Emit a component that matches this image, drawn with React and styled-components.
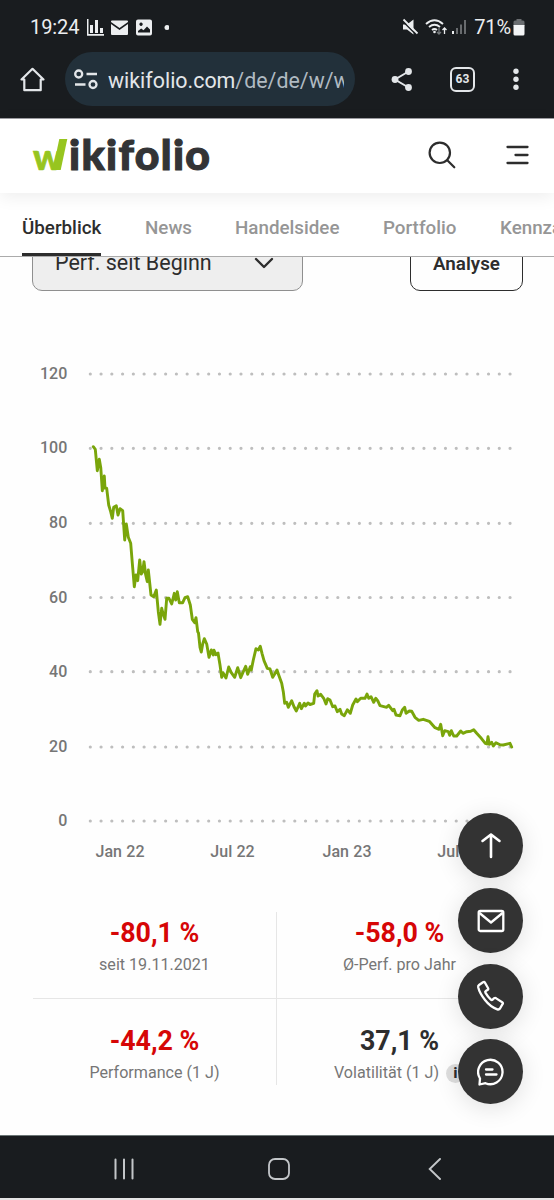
import styled, { createGlobalStyle } from "styled-components";

const palette = {
  black: "#2d2d2d",
  bar: "#191c1f",
  gray: "#767676",
  tab: "#969696",
  line: "#e6e6e6",
  red: "#d60606",
  green: "#79a50a",
  logoGreen: "#97c51f",
};

const GlobalStyle = createGlobalStyle`
  * {
    box-sizing: border-box;
  }

  body {
    margin: 0;
    background: white;
    font-family: Roboto, "Liberation Sans", sans-serif;
    color: ${palette.black};
  }

  svg {
    display: block;
    flex: none;
  }
`;

const Screen = styled.div`
  position: relative;
  display: flex;
  flex-direction: column;
  width: 554px;
  height: 1200px;
  overflow: hidden;
  background: #fefefe;
`;

const StatusBar = styled.div`
  display: flex;
  align-items: center;
  justify-content: space-between;
  height: 52px;
  padding: 2px 29px 0 30px;
  background: ${palette.bar};
  color: #eceef0;
`;

const StatusGroup = styled.div`
  display: flex;
  align-items: center;
`;

const StatusText = styled.span`
  font-size: 20px;
  line-height: 24px;
  letter-spacing: -0.1px;
`;

const Battery = styled.div`
  display: flex;
  align-items: center;
  gap: 2px;
  margin-left: 6px;
`;

const BrowserBar = styled.div`
  display: flex;
  align-items: flex-start;
  height: 66px;
  padding-left: 20px;
  background: ${palette.bar};
  color: #e3e6e9;

  .home {
    margin: 15px 19px 0 0;
  }

  .share {
    margin: 15px 0 0 36px;
  }

  .more {
    margin: 15px 0 0 37px;
  }
`;

const AddressField = styled.div`
  display: flex;
  align-items: center;
  width: 290px;
  height: 54px;
  padding: 2px 11px 0 9px;
  border-radius: 27px;
  background: #22303a;
`;

const Address = styled.div`
  width: 237px;
  margin-left: 9px;
  overflow: hidden;
  white-space: nowrap;
  font-size: 21.4px;
  color: #e3e6e9;

  span {
    color: #b0bac2;
  }
`;

const TabCount = styled.div`
  width: 25px;
  height: 25px;
  margin: 15px 0 0 37px;
  border: 2.5px solid #e3e6e9;
  border-radius: 6px;
  font-size: 12px;
  font-weight: 700;
  line-height: 20px;
  text-align: center;
`;

const Header = styled.header`
  position: relative;
  z-index: 2;
  display: flex;
  align-items: center;
  height: 75px;
  padding: 0 25px 0 32px;
  border-top: 1px solid #9a9a9f;
  background: white;
  box-shadow: 0 4px 16px rgba(0, 0, 0, 0.07);

  .search {
    margin: 0 50px 3px auto;
  }

  .menu {
    margin-bottom: 2px;
  }
`;

const Logo = styled.div`
  display: flex;
  align-items: baseline;
  height: 48px;
  font-family: Lato, "Open Sans", sans-serif;
  font-size: 41px;
  font-weight: 900;
  line-height: 46px;
  color: #333436;
`;

const LogoInitial = styled.span`
  position: relative;
  width: 37px;
  color: ${palette.logoGreen};
  -webkit-text-stroke: 0.8px ${palette.logoGreen};

  b {
    display: inline-block;
    font-weight: 900;
    transform: translateX(1px) scale(0.88, 0.86);
    transform-origin: 0 82%;
  }

  /* long upstroke of the w */
  &:after {
    content: "";
    position: absolute;
    left: 24px;
    top: 7px;
    width: 7.5px;
    height: 31px;
    background: ${palette.logoGreen};
    transform: skewX(-12deg);
  }
`;

const LogoRest = styled.span`
  display: inline-block;
  letter-spacing: 1.3px;
  transform: scaleX(1.04);
  transform-origin: 0 0;
  -webkit-text-stroke: 1.1px #333436;
`;

const TabBar = styled.nav`
  display: flex;
  align-items: flex-start;
  height: 64px;
  padding-left: 22px;
  border-bottom: 1.5px solid #ababab;
  background: white;
  overflow: hidden;
`;

const Tab = styled.div`
  flex: none;
  width: ${(props) => props.$width}px;
  height: 63px;
  margin-right: ${(props) => props.$gap || 0}px;
  padding-top: 22px;
  border-bottom: 3px solid
    ${(props) => (props.$active ? palette.black : "transparent")};
  color: ${(props) => (props.$active ? palette.black : palette.tab)};
  font-size: 18.8px;
  font-weight: 500;
  line-height: 26px;
  white-space: nowrap;
`;

const Controls = styled.div`
  display: flex;
  align-items: flex-end;
  justify-content: space-between;
  height: 34px;
  padding: 0 31px 0 32px;
  overflow: hidden;
`;

const Select = styled.div`
  display: flex;
  flex: none;
  align-items: center;
  justify-content: space-between;
  width: 271px;
  height: 56px;
  padding: 0 28px 0 22px;
  border: 1px solid #8f8f8f;
  border-radius: 10px;
  background: #eeeeee;
  font-size: 21.5px;
  line-height: 22px;
`;

const AnalyseButton = styled.div`
  flex: none;
  width: 113px;
  height: 56px;
  border: 1px solid ${palette.black};
  border-radius: 10px;
  font-size: 18.8px;
  font-weight: 600;
  line-height: 56px;
  text-align: center;
`;

const ChartArea = styled.div`
  height: 609px;

  text {
    fill: ${palette.gray};
    font-size: 16px;
    font-weight: 500;
    letter-spacing: 0.1px;
  }
`;

const Stats = styled.div`
  display: grid;
  grid-template-columns: 244px 245px;
  grid-template-rows: 87px 86px;
  width: 489px;
  margin: 12px 0 0 33px;
`;

const Stat = styled.div`
  display: flex;
  flex-direction: column;
  align-items: center;
  padding-top: ${(props) => (props.$bottom ? 25 : 4)}px;
  border-right: ${(props) => (props.$left ? `1px solid ${palette.line}` : 0)};
  border-bottom: ${(props) => (props.$bottom ? 0 : `1px solid ${palette.line}`)};
`;

const StatValue = styled.div`
  font-size: 26.8px;
  font-weight: 700;
  line-height: 34px;
  color: ${(props) => (props.$negative ? palette.red : palette.black)};
`;

const StatLabel = styled.div`
  display: flex;
  align-items: center;
  font-size: 16.1px;
  line-height: 30px;
  color: ${palette.gray};
`;

const Info = styled.span`
  width: 19px;
  height: 19px;
  margin-left: 7px;
  border-radius: 50%;
  background: #dedede;
  color: ${palette.black};
  font-size: 14px;
  font-weight: 900;
  line-height: 19px;
  text-align: center;
`;

const FloatingActions = styled.div`
  position: absolute;
  right: 31px;
  top: 813px;
  display: flex;
  flex-direction: column;
  gap: 10.4px;
`;

const RoundButton = styled.div`
  display: flex;
  align-items: center;
  justify-content: center;
  width: 65px;
  height: 65px;
  border-radius: 50%;
  background: #333333;
  color: white;
  box-shadow: 0 4px 24px rgba(0, 0, 0, 0.12);
`;

const SystemNav = styled.div`
  display: flex;
  align-items: center;
  justify-content: space-between;
  height: 65px;
  margin-top: auto;
  padding: 3px 112px 0 113px;
  border-top: 1px solid #6a7575;
  border-bottom: 2px solid #e4e4e4;
  background: ${palette.bar};

  .home {
    margin-right: 6px;
  }
`;

const tabs = [
  { name: "Überblick", width: 79, gap: 44 },
  { name: "News", width: 47, gap: 43 },
  { name: "Handelsidee", width: 105, gap: 43 },
  { name: "Portfolio", width: 74, gap: 43 },
  { name: "Kennzahlen", width: 100, gap: 0 },
];

const stats = [
  { value: "-80,1 %", label: "seit 19.11.2021", negative: true },
  { value: "-58,0 %", label: "Ø-Perf. pro Jahr", negative: true },
  { value: "-44,2 %", label: "Performance (1 J)", negative: true },
  { value: "37,1 %", label: "Volatilität (1 J)", info: true },
];

const gridLines = [
  { label: "120", y: 374 },
  { label: "100", y: 448.3 },
  { label: "80", y: 523.3 },
  { label: "60", y: 597.5 },
  { label: "40", y: 671.7 },
  { label: "20", y: 747 },
  { label: "0", y: 821 },
];

const months = [
  { label: "Jan 22", x: 120 },
  { label: "Jul 22", x: 232.5 },
  { label: "Jan 23", x: 347 },
  { label: "Jul 23", x: 459.5 },
];

const performance = `
  93.3,446.7 95.3,449.3 96.3,460 97.3,470.7 99.3,459.3 100.8,468 102.3,490.7 104.3,476
  105,488 106.7,488.3 108.7,505 110.5,511 112.3,518.3 113.7,507.3 116.3,505.7
  118,515 120,508.7 122.7,510.7 124.7,540 126.3,524 128.3,537.3 130.7,543.3
  132.3,563 134.3,586.7 136,575 137.7,580.7 139.7,560 141.3,574 142.7,571.7
  144,561.7 145.7,575 147.3,581.7 148.3,570 151,595 153.7,596.7 156.3,590
  158.3,611.7 160,624.3 161.7,608.3 163,613.3 165,619.3 166.7,598.3 169,598.3
  171.7,604 174.3,593.3 175.7,600 177.3,591.7 179.3,602.7 182.7,602.7 185,597.7
  187.7,596.7 190.3,605 192.3,619.3 194.7,622.7 196,617.7 197.7,631.7 198.5,633
  200,647.3 201.3,652 202.7,644 204.3,638.7 206.7,644 209,657.3 211.3,650
  213.3,655 214,650.3 216,654.7 218,653 220,665 221.7,677.3 223,672.7 226,678
  228.7,667 231.3,672.7 234.7,677.3 237.7,667.7 240.7,677.7 243.3,671.7
  245.7,666.3 247.7,674.3 250.3,666.7 251.3,670 253.3,660 256,648.7 258.3,650
  260.3,646.3 262,653.3 264,660.7 267.3,668.3 270,669 272.7,677.3 274.7,674
  277,670 278.7,675 281.7,683.3 283.3,691.7 284.7,703.3 286.7,702.3 288.3,707.3
  291.7,700.7 294,706.7 296.3,711 299.7,703.3 301.3,708.7 304.3,703.3 305.5,706
  308,703 310,704.5 313.7,703.3 314.7,694 317,690.7 318,696 320.7,694.3
  323.7,698.3 326,704 327.7,698.7 330,700 332.7,706.7 335,706 337.3,711.7
  340,709.3 341.7,714 344.3,715.7 347.3,709.8 350.3,713.3 352.7,705 356,699
  357.3,701.7 360.7,698.3 365,698.3 367,694 368.7,698.3 371,696.7 373.7,702.3
  375.7,698.3 377.7,700.7 380,705.7 386.7,707.3 388.7,705.3 392.7,710.7
  394,709.3 396,715 400,715.7 402.3,710 404.7,707.3 406,713.3 409.3,711
  411.7,711.3 415,717.3 418.7,720.3 423.3,719.3 429.3,721.3 435,727.7 439,729.3
  440.7,724.3 442.7,735.7 444.7,730.7 448.3,731.7 449.7,735.3 451.3,730.7
  453.7,736 456.7,736 460.7,731 463,733.3 466.7,731.7 470.7,731.3 473.7,729.7
  476.7,733.3 481.3,738.3 485.3,743.3 487,744 488,736.7 489.3,744.3 491.7,742.3
  493.3,746 496,742.7 500,744.7 503.3,745 510,743.3 511.7,747
`;

const Chart = () => (
  <ChartArea>
    <svg width="554" height="609" viewBox="0 291 554 609">
      {gridLines.map(({ label, y }) => (
        <g key={label}>
          <text x="67.5" y={y + 5} textAnchor="end">
            {label}
          </text>
          <line
            x1="90.3"
            x2="512"
            y1={y}
            y2={y}
            stroke="#bebebe"
            strokeWidth="3.2"
            strokeLinecap="round"
            strokeDasharray="0 10.763"
          />
        </g>
      ))}
      <polyline
        points={performance}
        fill="none"
        stroke={palette.green}
        strokeWidth="2.9"
        strokeLinecap="round"
        strokeLinejoin="round"
      />
      {months.map(({ label, x }) => (
        <text key={label} x={x} y="856.5" textAnchor="middle">
          {label}
        </text>
      ))}
    </svg>
  </ChartArea>
);

const NotificationIcons = () => (
  <svg width="90" height="20" viewBox="79 17 90 20" fill="#eceef0">
    <path d="M87 19h1.5v15H104v1.7H87zM90 25h3v8h-3zM95 20h3v13h-3zM100 28h3v5h-3z" />
    <path d="M111 22v-.5q0-1 1-1h15q1 0 1 1v.5l-8.500 6zM111 24l8.500 6 8.500-6v10q0 1-1 1h-15q-1 0-1-1z" />
    <path
      fillRule="evenodd"
      d="M138 19.500h12q2 0 2 2v12q0 2-2 2h-12q-2 0-2-2v-12q0-2 2-2zm0 13h12v-3l-3-3-3.500 3.700-2.300-1.800-3.200 2.600zM141 22.500a1.700 1.700 0 1 0 .1 0z"
    />
    <circle cx="167" cy="27.500" r="2.500" />
  </svg>
);

const SignalIcons = () => (
  <svg width="66" height="20" viewBox="402 17 66 20" fill="none">
    <path d="M403 24.500h4l6.500-5v15l-6.500-5h-4z" fill="#eceef0" />
    <path d="M402 20.500l15 15" stroke={palette.bar} strokeWidth="1.500" />
    <path d="M403.500 19.500l14 14" stroke="#eceef0" strokeWidth="1.800" />
    <path
      d="M426 24q8.500-7.500 17 0M429 27q5.500-4.500 11 0M432 30q2.500-2 5 0"
      stroke="#eceef0"
      strokeWidth="1.900"
    />
    <circle cx="434.500" cy="32" r="1.300" fill="#eceef0" />
    <path d="M439 28v6M437 32l2 2 2-2" stroke="#777b7e" strokeWidth="1.300" />
    <path d="M444.500 34v-6M442.500 30l2-2 2 2" stroke="#eceef0" strokeWidth="1.300" />
    <path d="M453 34v-3" stroke="#eceef0" strokeWidth="2" />
    <path
      d="M457 34v-6M461 34v-9.500M465 34V20"
      stroke="#686b6e"
      strokeWidth="2"
    />
  </svg>
);

const BatteryIcon = () => (
  <svg width="12" height="18" viewBox="0 0 12 18">
    <path d="M3.500 1h5v1.500H10q1.500 0 1.500 1.500v4H.5V4q0-1.500 1.500-1.500h1.500z" fill="#6a6d70" />
    <path d="M.5 7h11v9q0 1.500-1.500 1.500H2q-1.500 0-1.500-1.500z" fill="#f3f4f5" />
  </svg>
);

const App = () => {
  return (
    <>
      <GlobalStyle />
      <Screen>
        <StatusBar>
          <StatusGroup>
            <StatusText>19:24</StatusText>
            <NotificationIcons />
          </StatusGroup>
          <StatusGroup>
            <SignalIcons />
            <Battery>
              <StatusText>71%</StatusText>
              <BatteryIcon />
            </Battery>
          </StatusGroup>
        </StatusBar>
        <BrowserBar>
          <svg className="home" width="26" height="26" viewBox="0 0 26 26" fill="none">
            <path
              d="M1.500 12.500 12.500 1.800l11 10.700H20.700v10.700H4.300V12.500z"
              stroke="#e3e6e9"
              strokeWidth="2.200"
              strokeLinejoin="round"
            />
          </svg>
          <AddressField>
            <svg width="25" height="22" viewBox="0 0 25 22" fill="none">
              <g stroke="#e3e6e9" strokeWidth="2.300">
                <circle cx="4.700" cy="5" r="3.500" />
                <path d="M12.500 5H23M1 15.500h10.500" />
                <circle cx="19" cy="15.500" r="3.500" />
              </g>
            </svg>
            <Address>
              wikifolio.com<span>/de/de/w/w</span>
            </Address>
          </AddressField>
          <svg className="share" width="22" height="26" viewBox="0 0 22 26">
            <path d="M17.500 4.500 4 12.500l13.500 8" stroke="#e3e6e9" strokeWidth="2" fill="none" />
            <g fill="#e3e6e9">
              <circle cx="17.500" cy="4.500" r="3.400" />
              <circle cx="4" cy="12.500" r="3.400" />
              <circle cx="17.500" cy="20.500" r="3.400" />
            </g>
          </svg>
          <TabCount>63</TabCount>
          <svg className="more" width="8" height="26" viewBox="0 0 8 26" fill="#e3e6e9">
            <circle cx="4" cy="4.300" r="2.700" />
            <circle cx="4" cy="12.300" r="2.700" />
            <circle cx="4" cy="20.300" r="2.700" />
          </svg>
        </BrowserBar>
        <Header>
          <Logo>
            <LogoInitial>
              <b>w</b>
            </LogoInitial>
            <LogoRest>ikifolio</LogoRest>
          </Logo>
          <svg className="search" width="28" height="28" viewBox="0 0 28 28" fill="none">
            <g stroke={palette.black} strokeWidth="2.200" strokeLinecap="round">
              <circle cx="11.800" cy="11.800" r="10.200" />
              <path d="m19.300 19.300 7 7" />
            </g>
          </svg>
          <svg className="menu" width="23" height="20" viewBox="0 0 23 20" fill="none">
            <path
              d="M1.500 2h20M9.500 10h12M1.500 18h20"
              stroke={palette.black}
              strokeWidth="2.300"
              strokeLinecap="round"
            />
          </svg>
        </Header>
        <TabBar>
          {tabs.map((tab, i) => (
            <Tab key={tab.name} $active={i === 0} $width={tab.width} $gap={tab.gap}>
              {tab.name}
            </Tab>
          ))}
        </TabBar>
        <Controls>
          <Select>
            Perf. seit Beginn
            <svg width="20" height="12" viewBox="0 0 20 12" fill="none">
              <path
                d="m2 2 8 8 8-8"
                stroke={palette.black}
                strokeWidth="2.400"
                strokeLinecap="round"
                strokeLinejoin="round"
              />
            </svg>
          </Select>
          <AnalyseButton>Analyse</AnalyseButton>
        </Controls>
        <Chart />
        <Stats>
          {stats.map((stat, i) => (
            <Stat key={stat.label} $left={i % 2 === 0} $bottom={i > 1}>
              <StatValue $negative={stat.negative}>{stat.value}</StatValue>
              <StatLabel>
                {stat.label}
                {stat.info ? <Info>i</Info> : null}
              </StatLabel>
            </Stat>
          ))}
        </Stats>
        <SystemNav>
          <svg width="22" height="22" viewBox="0 0 22 22" fill="none">
            <path
              d="M2.500 1.500v19M11 1.500v19M19.500 1.500v19"
              stroke="#c3c6c9"
              strokeWidth="2"
              strokeLinecap="round"
            />
          </svg>
          <svg className="home" width="22" height="22" viewBox="0 0 22 22" fill="none">
            <rect x="1" y="1" width="20" height="20" rx="6" stroke="#c3c6c9" strokeWidth="1.800" />
          </svg>
          <svg width="14" height="22" viewBox="0 0 14 22" fill="none">
            <path
              d="M12 1 1.700 11 12 21"
              stroke="#c3c6c9"
              strokeWidth="1.900"
              strokeLinecap="round"
            />
          </svg>
        </SystemNav>
        <FloatingActions>
          <RoundButton>
            <svg width="28" height="28" viewBox="0 0 28 28" fill="none">
              <path
                d="M14 25V2.500M5.500 9 14 2.500 22.500 9"
                stroke="white"
                strokeWidth="2.600"
                strokeLinecap="round"
                strokeLinejoin="round"
              />
            </svg>
          </RoundButton>
          <RoundButton>
            <svg width="28" height="24" viewBox="0 0 28 24" fill="none">
              <g stroke="white" strokeWidth="2.300" strokeLinejoin="round">
                <rect x="1.700" y="2" width="24.600" height="20" rx="1.500" />
                <path d="m2.500 4 11.500 9.500L25.500 4" />
              </g>
            </svg>
          </RoundButton>
          <RoundButton>
            <svg width="30" height="32" viewBox="0 0 30 32" fill="none">
              <path
                d="m3 5 4-2.800q1.300-.8 2 .5l3 5.300q.7 1.300-.6 2l-1.600 1q-1 .7-.4 1.700 2.300 4 5.500 6.900.9.800 1.700 0l1.600-1.400q1-.8 2 .2l6 3.800q1.300.8.300 2L24 28.500q-1 1.400-2.700.8Q14.500 27 9 20 3.500 13 2.200 7.300 1.900 5.800 3 5z"
                stroke="white"
                strokeWidth="2.300"
                strokeLinejoin="round"
              />
            </svg>
          </RoundButton>
          <RoundButton>
            <svg width="28" height="28" viewBox="0 0 28 28" fill="none">
              <g
                stroke="white"
                strokeWidth="2.300"
                strokeLinecap="round"
                strokeLinejoin="round"
              >
                <path d="M3 20.500A12.200 12.200 0 1 1 8.500 25.200L2.500 26.500z" />
                <path d="M9 11.500h6.500M9 16.500h10.500" />
              </g>
            </svg>
          </RoundButton>
        </FloatingActions>
      </Screen>
    </>
  );
};

export default App;
